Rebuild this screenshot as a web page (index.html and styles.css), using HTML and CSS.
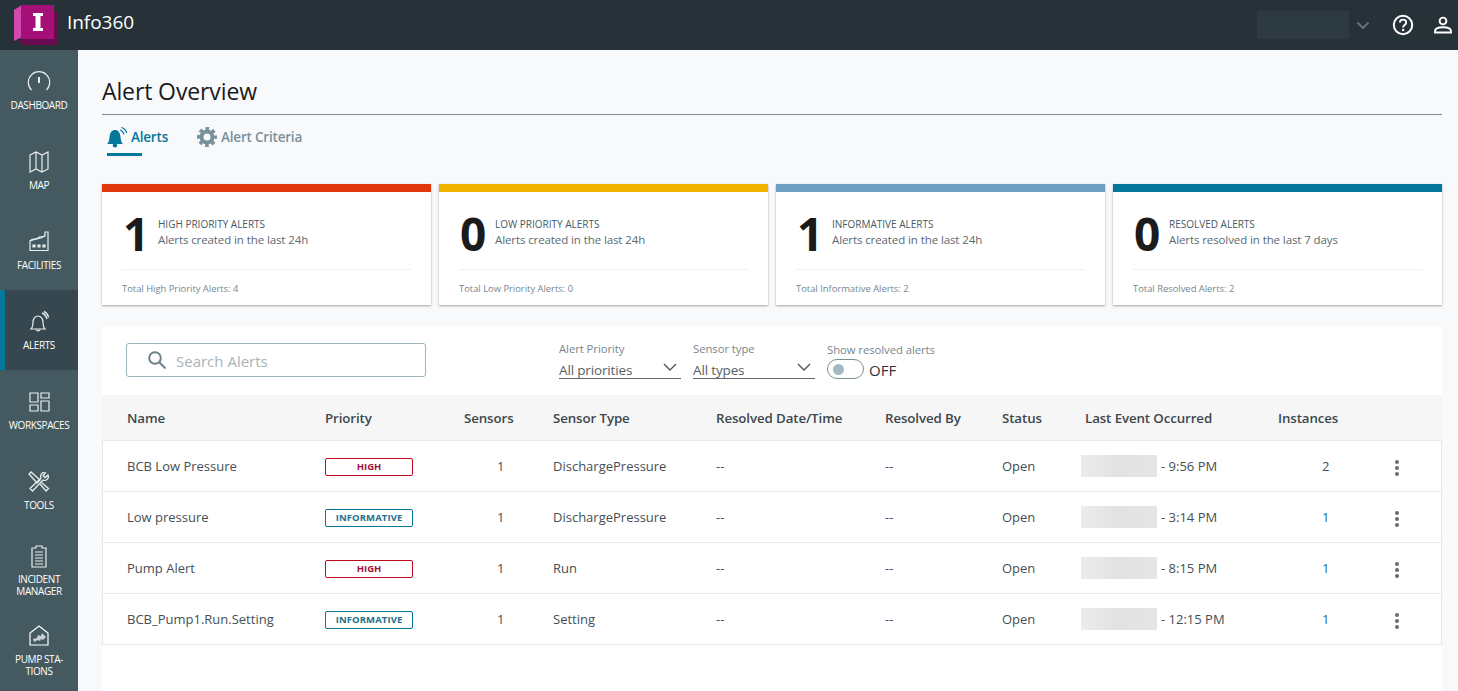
FILE: index.html
```html
<!DOCTYPE html>
<html lang="en">
<head>
<meta charset="utf-8">
<title>Alert Overview</title>
<link rel="stylesheet" href="styles.css">
</head>
<body>
<header class="topbar">
  <svg class="logo" width="44" height="41" viewBox="0 0 44 41">
    <polygon points="39,7 44,7 44,40 10,40 4,36 10,33" fill="#6a0a4f"/>
    <polygon points="0,5 8,0 8,32 0,36" fill="#d548ad"/>
    <rect x="7" y="0" width="33" height="34" fill="#a50f78"/>
    <rect x="19" y="8" width="10" height="3" fill="#fff"/>
    <rect x="19" y="23" width="10" height="3" fill="#fff"/>
    <rect x="21.500" y="10" width="5" height="14" fill="#fff"/>
  </svg>
  <span class="brand">Info360</span>
  <div class="top-actions">
    <div class="org-box"></div>
    <svg class="org-chev" width="14" height="9" viewBox="0 0 14 9"><path d="M1.500 1.500 7 7l5.500-5.500" fill="none" stroke="#5f7378" stroke-width="2"/></svg>
    <svg class="top-icon" width="22" height="22" viewBox="0 0 22 22"><circle cx="11" cy="11" r="9.200" fill="none" stroke="#fff" stroke-width="2"/><path d="M7.900 8.600c0-1.800 1.400-3 3.200-3s3.100 1.200 3.100 2.800c0 2.500-3.100 2.500-3.100 5" fill="none" stroke="#fff" stroke-width="1.900"/><circle cx="11.100" cy="16" r="1.200" fill="#fff"/></svg>
    <svg class="top-icon" width="18" height="18" viewBox="0 0 18 18"><circle cx="9" cy="5" r="3.400" fill="none" stroke="#fff" stroke-width="1.900"/><path d="M1 16.500v-1.300c0-2.600 3.600-3.900 8-3.900s8 1.300 8 3.900v1.300z" fill="none" stroke="#fff" stroke-width="1.900"/></svg>
  </div>
</header>
<div class="shell">
  <nav class="sidebar">
    <a class="nav-item">
      <svg width="24" height="24" viewBox="0 0 24 24" fill="none" stroke="#e8eded" stroke-width="1.200"><path d="M4.500 20A10.700 10.700 0 1 1 19.500 20"/><path d="M12 7v6" stroke-width="2"/></svg>
      <span>DASHBOARD</span>
    </a>
    <a class="nav-item">
      <svg width="24" height="24" viewBox="0 0 24 24" fill="none" stroke="#e8eded" stroke-width="1.200"><path d="M3 5l6-3 6 3 6-3v17l-6 3-6-3-6 3zM9 2v17M15 5v17"/></svg>
      <span>MAP</span>
    </a>
    <a class="nav-item">
      <svg width="24" height="24" viewBox="0 0 24 24" fill="none" stroke="#e8eded" stroke-width="1.200"><path d="M3 20.500V11l6-2 5-1 4-2V2h3v18.500z"/><path d="M3 11c3-4 5 0 8-3s4 1 7-3"/><path d="M6 15h2v2H6zM11 15h2v2h-2zM16 15h2v2h-2z" fill="#e8eded"/></svg>
      <span>FACILITIES</span>
    </a>
    <a class="nav-item active">
      <svg width="24" height="24" viewBox="0 0 24 24" fill="none" stroke="#e8eded" stroke-width="1.200"><path d="M4 19c2-2 2-4 2-7s2-6 5-6 5 3 5 6 0 5 2 7z"/><path d="M9 19.500a2.200 2.200 0 0 0 4 0"/><path d="M15 3c3 1 4 3 5 6M17 1.500c2 1 4 3 4.500 6" stroke-width="1.400"/></svg>
      <span>ALERTS</span>
    </a>
    <a class="nav-item">
      <svg width="24" height="24" viewBox="0 0 24 24" fill="none" stroke="#e8eded" stroke-width="1.200"><path d="M3 3h8v9H3zM14 3h8v5h-8zM14 11h8v10h-8zM3 15h8v6H3z"/></svg>
      <span>WORKSPACES</span>
    </a>
    <a class="nav-item">
      <svg width="24" height="24" viewBox="0 0 24 24" fill="none" stroke="#e8eded" stroke-width="1.300"><path d="M4 2 2 4l8 9 3-3zM13 14l6 7 2.500-2.500-7-6"/><path d="M21 5l-3 2.500-2-2L18.500 3C15 1.500 12.500 5 14 8L3 18.500 5.500 21 16 10c3 1.500 6.500-1.500 5-5z"/></svg>
      <span>TOOLS</span>
    </a>
    <a class="nav-item two">
      <svg width="24" height="24" viewBox="0 0 24 24" fill="none" stroke="#e8eded" stroke-width="1.200"><path d="M5 4h4V2h6v2h4v19H5z"/><path d="M8 8h8M8 11h8M8 14h8M8 17h8M8 20h8"/></svg>
      <span>INCIDENT MANAGER</span>
    </a>
    <a class="nav-item two">
      <svg width="24" height="24" viewBox="0 0 24 24" fill="none" stroke="#fff" stroke-width="1.200"><path d="M3 21V9l9-7 9 7v12z"/><path d="M7 18l-1-3 4-1 1-3 3 1 1-3 4 4-3 3-2-1-1 2-2-1z" fill="#c8d0d2" stroke="none"/></svg>
      <span>PUMP STA-<br>TIONS</span>
    </a>
  </nav>
  <main class="content">
    <h1 class="page-title">Alert Overview</h1>
    <div class="tabs">
      <a class="tab tab-on">
        <svg width="21" height="21" viewBox="0 0 21 21"><path d="M0 17c1.500-1 2-3 2.500-7 .4-4.500 2.500-7 5.500-7s5.100 2.500 5.500 7c.5 4 1 6 2.500 7z" fill="#04779b"/><circle cx="8" cy="18.300" r="2.200" fill="#04779b"/><path d="M13 3c2 .6 3.500 2 4 4.500M14.500 .5c2.500.8 4.500 2.500 5.200 5.500" fill="none" stroke="#04779b" stroke-width="1.200"/></svg>
        <span>Alerts</span>
      </a>
      <a class="tab tab-off">
        <svg width="20" height="20" viewBox="0 0 20 20" fill="none" stroke="#78909c"><circle cx="10" cy="10" r="5.500" stroke-width="4"/><circle cx="10" cy="10" r="8.500" stroke-width="3" stroke-dasharray="3.700 2.980" stroke-dashoffset="1.850"/></svg>
        <span>Alert Criteria</span>
      </a>
    </div>
    <section class="cards">
      <article class="card c-high">
        <div class="card-main"><span class="big">1</span><div><h2>HIGH PRIORITY ALERTS</h2><p>Alerts created in the last 24h</p></div></div>
        <div class="card-foot">Total High Priority Alerts: 4</div>
      </article>
      <article class="card c-low">
        <div class="card-main"><span class="big">0</span><div><h2>LOW PRIORITY ALERTS</h2><p>Alerts created in the last 24h</p></div></div>
        <div class="card-foot">Total Low Priority Alerts: 0</div>
      </article>
      <article class="card c-info">
        <div class="card-main"><span class="big">1</span><div><h2>INFORMATIVE ALERTS</h2><p>Alerts created in the last 24h</p></div></div>
        <div class="card-foot">Total Informative Alerts: 2</div>
      </article>
      <article class="card c-res">
        <div class="card-main"><span class="big">0</span><div><h2>RESOLVED ALERTS</h2><p>Alerts resolved in the last 7 days</p></div></div>
        <div class="card-foot">Total Resolved Alerts: 2</div>
      </article>
    </section>
    <section class="panel">
      <div class="filters">
        <div class="search">
          <svg width="20" height="20" viewBox="0 0 20 20" fill="none" stroke="#6d7f87" stroke-width="2"><circle cx="8" cy="8" r="5.800"/><path d="M12.500 12.500 18.500 18.500"/></svg>
          <span class="search-text">Search Alerts</span>
        </div>
        <div class="select s1"><label>Alert Priority</label><div class="sel-val"><span>All priorities</span><svg width="14" height="8" viewBox="0 0 14 8"><path d="M1 1l6 6 6-6" fill="none" stroke="#555" stroke-width="1.400"/></svg></div></div>
        <div class="select s2"><label>Sensor type</label><div class="sel-val"><span>All types</span><svg width="14" height="8" viewBox="0 0 14 8"><path d="M1 1l6 6 6-6" fill="none" stroke="#555" stroke-width="1.400"/></svg></div></div>
        <div class="toggle-wrap"><label>Show resolved alerts</label><div class="toggle-row"><span class="toggle"><i></i></span><span class="toggle-text">OFF</span></div></div>
      </div>
      <div class="row head">
        <div>Name</div><div>Priority</div><div>Sensors</div><div>Sensor Type</div><div>Resolved Date/Time</div><div>Resolved By</div><div>Status</div><div>Last Event Occurred</div><div>Instances</div><div></div>
      </div>
      <div class="rows">
        <div class="row">
          <div>BCB Low Pressure</div><div><span class="badge high">HIGH</span></div><div class="num">1</div><div>DischargePressure</div><div>--</div><div>--</div><div>Open</div>
          <div class="event"><span class="blur"></span><span>- 9:56 PM</span></div><div class="num inst">2</div><div class="more"><i></i><i></i><i></i></div>
        </div>
        <div class="row">
          <div>Low pressure</div><div><span class="badge info">INFORMATIVE</span></div><div class="num">1</div><div>DischargePressure</div><div>--</div><div>--</div><div>Open</div>
          <div class="event"><span class="blur"></span><span>- 3:14 PM</span></div><div class="num inst link">1</div><div class="more"><i></i><i></i><i></i></div>
        </div>
        <div class="row">
          <div>Pump Alert</div><div><span class="badge high">HIGH</span></div><div class="num">1</div><div>Run</div><div>--</div><div>--</div><div>Open</div>
          <div class="event"><span class="blur"></span><span>- 8:15 PM</span></div><div class="num inst link">1</div><div class="more"><i></i><i></i><i></i></div>
        </div>
        <div class="row">
          <div>BCB_Pump1.Run.Setting</div><div><span class="badge info">INFORMATIVE</span></div><div class="num">1</div><div>Setting</div><div>--</div><div>--</div><div>Open</div>
          <div class="event"><span class="blur"></span><span>- 12:15 PM</span></div><div class="num inst link">1</div><div class="more"><i></i><i></i><i></i></div>
        </div>
      </div>
    </section>
  </main>
</div>
</body>
</html>
```
FILE: styles.css
```css
* { box-sizing: border-box; }
html, body { margin: 0; height: 691px; overflow: hidden; }
body { font-family: "Open Sans", "Noto Sans", sans-serif; color: #333; background: #f8f9fb; }
h1, h2, p { margin: 0; font-weight: 400; }

.topbar { height: 50px; background: #263238; display: flex; align-items: center; color: #fff; }
.logo { margin-left: 14px; margin-top: 1px; flex: none; }
.brand { margin-left: 9px; margin-top: -6px; font-size: 19px; font-weight: 500; letter-spacing: -.05px; }
.top-actions { margin-left: auto; display: flex; align-items: center; padding-right: 6px; }
.org-box { width: 92px; height: 28px; background: #2d3a3f; margin-right: 7px; }
.org-chev { margin-right: 22px; }
.top-icon { margin-right: 20px; }
.top-icon:last-child { margin-right: 0; }

.shell { display: flex; height: 641px; }
.sidebar { width: 78px; flex: none; background: #455a60; display: flex; flex-direction: column; }
.nav-item { height: 80px; flex: none; display: flex; flex-direction: column; align-items: center; padding-top: 20px; color: #fff; font-size: 10px; line-height: 12px; text-align: center; letter-spacing: -.4px; }
.nav-item svg { flex: none; margin-bottom: 5px; }
.nav-item.two { padding-top: 14px; }
.nav-item.active { background: #37474f; border-left: 5px solid #04779b; padding-right: 5px; }
.nav-item span { display: block; }

.content { flex: 1; padding: 27px 16px 0 24px; min-width: 0; }
.page-title { font-size: 23px; line-height: 28px; color: #1b1b1b; letter-spacing: -.12px; height: 38px; border-bottom: 1px solid #7b8f9c; }
.tabs { display: flex; gap: 28px; padding-left: 5px; height: 69px; }
.tab { display: flex; align-items: center; height: 41px; padding-top: 3px; font-size: 13.500px; font-weight: 600; color: #78909c; letter-spacing: -.2px; position: relative; }
.tab-on { gap: 3px; color: #04779b; }
.tab-off { gap: 4px; margin-left: 1px; }
.tab-on::after { content: ""; position: absolute; left: 0; bottom: 0; width: 35px; height: 3px; background: #04779b; }

.cards { display: grid; grid-template-columns: repeat(4, 329px); gap: 8px; }
.card { height: 121px; background: #fff; border-top: 8px solid #000; box-shadow: 0 1px 2px rgba(0, 0, 0, .35); padding: 0 20px; }
.c-high { border-top-color: #df370e; }
.c-low { border-top-color: #f0b400; }
.c-info { border-top-color: #6f9fc0; }
.c-res { border-top-color: #04779b; }
.card-main { height: 78px; display: flex; align-items: center; gap: 13px; border-bottom: 1px solid #f0f1f2; padding-top: 5px; }
.big { font-size: 46px; line-height: 50px; font-weight: 700; color: #1b1b1b; width: 22px; margin-left: 1px; letter-spacing: -1px; }
.card-main h2 { font-size: 10px; line-height: 13px; font-weight: 500; color: #455a64; letter-spacing: 0; }
.card-main p { font-size: 11.500px; line-height: 17px; color: #5b6a72; letter-spacing: -.1px; }
.card-foot { font-size: 9.400px; line-height: 13px; color: #78868e; padding-top: 12px; }

.panel { margin-top: 21px; background: #fff; height: 365px; }
.filters { height: 69px; display: flex; position: relative; }
.search { width: 300px; height: 34px; margin: 17px 0 0 24px; border: 1px solid #9fb5bd; border-radius: 3px; display: flex; align-items: center; gap: 9px; padding-left: 20px; color: #a8b4ba; font-size: 15px; }
.search-text { padding-top: 2px; }
.select { margin-top: 15px; display: flex; flex-direction: column; }
.select label, .toggle-wrap label { display: block; font-size: 11.300px; line-height: 15px; color: #78868e; letter-spacing: -.05px; }
.s1 { width: 122px; margin-left: 133px; }
.s2 { width: 122px; margin-left: 12px; }
.sel-val { height: 23px; display: flex; justify-content: space-between; align-items: center; border-bottom: 1px solid #666; padding: 6px 4px 0 0; color: #555f64; font-size: 13.500px; letter-spacing: -.15px; }
.sel-val svg { margin-top: -6px; }
.toggle-wrap { margin: 16px 0 0 12px; }
.toggle-row { display: flex; align-items: center; gap: 5px; margin-top: 1px; font-size: 15px; color: #333; line-height: 20px; }
.toggle-text { padding-top: 2px; }
.toggle { width: 37px; height: 20px; border: 1px solid #7a8e96; border-radius: 10px; display: block; padding: 4px 0 0 5px; }
.toggle i { display: block; width: 11px; height: 11px; border-radius: 50%; background: #a3bac4; }

.row { display: grid; grid-template-columns: 198px 139px 89px 163px 169px 117px 83px 193px 118px 31px; align-items: center; height: 51px; padding-left: 25px; font-size: 13px; color: #454f54; border-bottom: 1px solid #e6e8ea; }
.row.head { height: 45px; background: #f6f6f6; border-bottom: 0; font-size: 13.300px; font-weight: 600; color: #3d474c; letter-spacing: -.1px; }
.rows { border-left: 1px solid #e6e8ea; border-right: 1px solid #e6e8ea; border-top: 1px solid #e6e8ea; }
.rows .row { padding-left: 24px; grid-template-columns: 198px 139px 89px 163px 169px 117px 83px 193px 116px 31px; }
.num { padding-left: 33px; }
.inst { padding-left: 44px; }
.link { color: #1a6e96; }
.badge { display: block; width: 88px; height: 18px; margin-top: 2px; border: 1px solid; border-radius: 2px; font-size: 9.500px; line-height: 16px; font-weight: 700; text-align: center; }
.high { border-color: #bf0a1e; color: #a3103f; }
.info { border-color: #04779b; color: #236f8c; letter-spacing: .1px; }
.event { display: flex; align-items: center; gap: 4px; margin-left: -4px; }
.blur { width: 76px; height: 22px; background: linear-gradient(90deg, #ececec, #e2e2e2 50%, #e6e6e6); }
.more { display: flex; flex-direction: column; gap: 2px; align-items: center; width: 6px; margin-top: 4px; }
.more i { display: block; width: 4px; height: 4px; border-radius: 50%; background: #6b6b6b; }
```
